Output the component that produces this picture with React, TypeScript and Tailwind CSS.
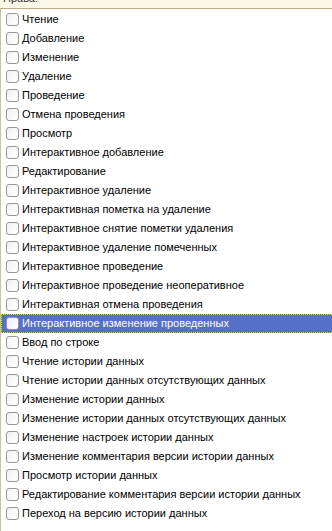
const rights = [
  'Чтение',
  'Добавление',
  'Изменение',
  'Удаление',
  'Проведение',
  'Отмена проведения',
  'Просмотр',
  'Интерактивное добавление',
  'Редактирование',
  'Интерактивное удаление',
  'Интерактивная пометка на удаление',
  'Интерактивное снятие пометки удаления',
  'Интерактивное удаление помеченных',
  'Интерактивное проведение',
  'Интерактивное проведение неоперативное',
  'Интерактивная отмена проведения',
  'Интерактивное изменение проведенных',
  'Ввод по строке',
  'Чтение истории данных',
  'Чтение истории данных отсутствующих данных',
  'Изменение истории данных',
  'Изменение истории данных отсутствующих данных',
  'Изменение настроек истории данных',
  'Изменение комментария версии истории данных',
  'Просмотр истории данных',
  'Редактирование комментария версии истории данных',
  'Переход на версию истории данных',
];

const SELECTED = 16;

function Check() {
  return (
    <span className="h-[13px] w-[13px] shrink-0 rounded-[3px] border border-[#969696] bg-gradient-to-br from-[#f2f2f2] to-white" />
  );
}

export default function App() {
  return (
    <div
      className="h-[531px] w-[332px] overflow-hidden bg-white text-[11px] text-black"
      style={{ fontFamily: '"Liberation Sans", Arial, sans-serif' }}
    >
      <div className="h-[9px] overflow-hidden border-b border-[#b6af88] bg-[#fbf8e8]">
        <div className="mt-[-8px] pl-[3px] leading-[13px] text-[#333]">Права:</div>
      </div>
      <div className="flex h-full flex-col border-l border-[#c9c2a2] pt-[1px]">
        {rights.map((r, i) => (
          <div
            key={r}
            className={
              i === SELECTED
                ? 'flex h-[19px] items-center gap-[3px] border-y border-l border-dotted border-[#d6cf5a] bg-[#5670c8] pl-[4px] text-white'
                : 'flex h-[19px] items-center gap-[3px] pl-[5px]'
            }
          >
            <Check />
            <span className="whitespace-nowrap">{r}</span>
          </div>
        ))}
      </div>
    </div>
  );
}
